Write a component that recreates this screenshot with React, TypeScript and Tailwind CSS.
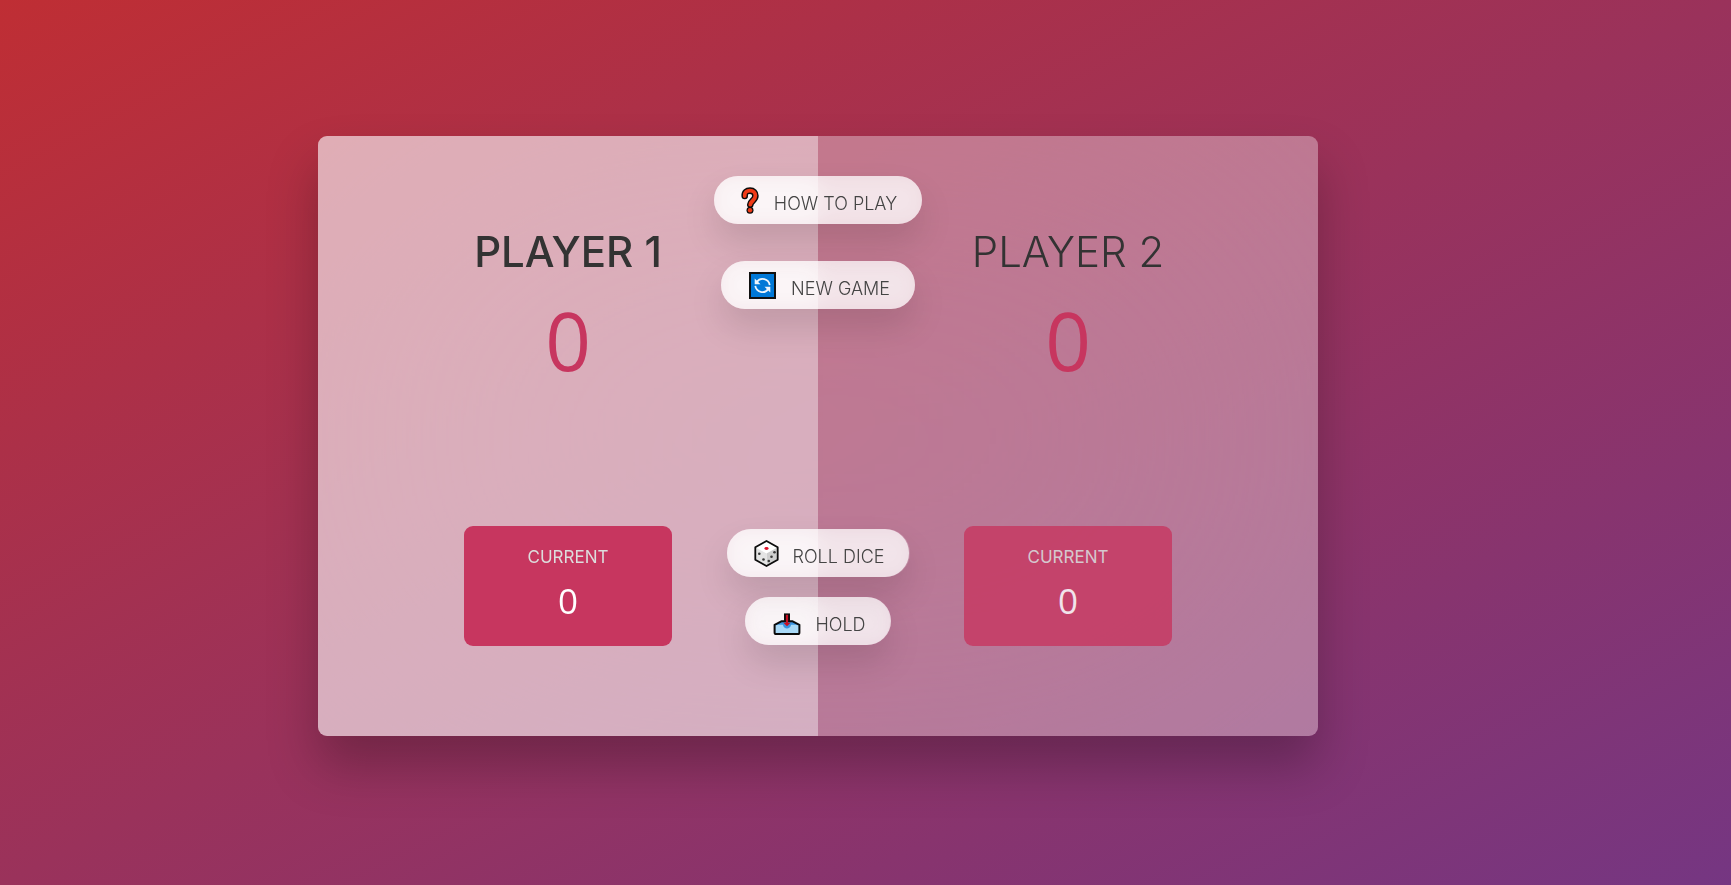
import type { ReactNode } from 'react';

function QuestionIcon() {
  return (
    <svg viewBox="0 0 20 28" className="h-7 w-5 shrink-0" fill="none" strokeLinecap="round" strokeLinejoin="round" aria-hidden="true">
      <path d="M4.700 10C4.400 6.200 6.800 4.600 10 4.600c3.400 0 5.400 2.200 5.400 5.200 0 4.600-4.700 5-5.100 8.800" stroke="#0c0c0c" strokeWidth="6.600" />
      <circle cx="10" cy="24.200" r="3.500" fill="#0c0c0c" />
      <path d="M4.700 10C4.400 6.200 6.800 4.600 10 4.600c3.400 0 5.400 2.200 5.400 5.200 0 4.600-4.700 5-5.100 8.800" stroke="#f03a17" strokeWidth="3.800" />
      <circle cx="10" cy="24.200" r="2.200" fill="#f03a17" />
    </svg>
  );
}

function RefreshIcon() {
  return (
    <svg viewBox="0 0 28 28" className="size-7 shrink-0" fill="none" aria-hidden="true">
      <rect x="1" y="2" width="25" height="25" fill="#0078d7" stroke="#111" strokeWidth="2" />
      <path d="M7.800 10.900a7.200 7.200 0 0 1 12.900 3.200M19.200 18.100a7.200 7.200 0 0 1-12.900-3.200" stroke="#eef5fc" strokeWidth="1.800" />
      <path d="M5.700 7.500v5.800h5.800zM21.300 21.500v-5.800h-5.800z" fill="#eef5fc" />
    </svg>
  );
}

function DiceIcon() {
  return (
    <svg viewBox="0 0 26 28" className="h-7 w-[26px] shrink-0" aria-hidden="true">
      <g transform="translate(0.5 0.5)">
        <path d="M13 1.500 24.200 7.800v12.400L13 26.500 1.800 20.200V7.800z" fill="#fff" />
        <path d="M13 14 24.200 7.800v12.400L13 26.500z" fill="#cfcfcf" />
        <path d="M13 14 1.800 7.800v12.400L13 26.500z" fill="#e4e4e4" />
        <path d="M13 1.500 24.200 7.800v12.400L13 26.500 1.800 20.200V7.800z" fill="none" stroke="#0c0c0c" strokeWidth="1.800" strokeLinejoin="round" />
        <ellipse cx="13" cy="9" rx="2.100" ry="1.400" fill="#e0102a" />
        <g fill="#3a3a3a">
          <circle cx="5.800" cy="14.200" r="1.300" />
          <circle cx="10" cy="20" r="1.300" />
          <circle cx="21" cy="12.800" r="1.300" />
          <circle cx="18" cy="17.200" r="1.300" />
          <circle cx="15.300" cy="21.500" r="1.300" />
        </g>
      </g>
    </svg>
  );
}

function InboxIcon() {
  return (
    <svg viewBox="0 0 28 28" className="size-7 shrink-0" strokeLinejoin="round" aria-hidden="true">
      <g transform="translate(0 1.6)">
        <path d="M1.600 16.200 8.800 12.600h10.400l7.200 3.600v7.600q0 1.600-1.600 1.600H3.200q-1.600 0-1.600-1.600z" fill="#a9d9f7" />
        <path d="M1.600 16.200 8.800 12.600h10.400l7.200 3.600H18c-.6 5-7.400 5-8 0z" fill="#3a94e0" />
        <path d="M1.600 16.200 8.800 12.600h10.400l7.200 3.600v7.600q0 1.600-1.600 1.600H3.200q-1.600 0-1.600-1.600z" fill="none" stroke="#0c0c0c" strokeWidth="2" />
        <path d="M11 4.800h6v8.200h-6z" fill="#0c0c0c" />
        <path d="M12.900 6.200h2.200v8h2.500L14 17.600l-3.600-3.400h2.500z" fill="#c80f22" />
      </g>
    </svg>
  );
}

function GameButton({ icon, children }: { icon: ReactNode; children: ReactNode }) {
  return (
    <button
      type="button"
      className="flex h-12 cursor-pointer items-center rounded-full bg-white/70 px-[25px] text-lg font-light whitespace-nowrap text-[#444] uppercase shadow-[0_18px_35px_rgba(0,0,0,0.12)] backdrop-blur-[10px]"
    >
      {icon}
      <span className="pt-2">{children}</span>
    </button>
  );
}

function Player({ name, score, current, active }: { name: string; score: number; current: number; active: boolean }) {
  return (
    <section className={`flex flex-col items-center py-[90px] ${active ? 'col-start-1 bg-white/40' : 'col-start-2'}`}>
      <h2 className={`mb-[10px] text-[42px] leading-[52px] whitespace-nowrap text-[#333] uppercase ${active ? 'font-medium' : 'font-light'}`}>
        {name}
      </h2>
      <p className="mb-auto font-['Open_Sans',sans-serif] text-[80px] leading-[104px] text-[#c7365f]">{score}</p>
      <div
        className={`flex min-h-[120px] w-[208px] flex-col items-center rounded-[9px] bg-[#c7365f] pt-[21px] text-white ${active ? '' : 'opacity-80'}`}
      >
        <p className="mb-3 text-[17px] leading-5 text-[#ddd] uppercase">Current</p>
        <p className="font-['Open_Sans',sans-serif] text-[35px] leading-[44px] font-medium">{current}</p>
      </div>
    </section>
  );
}

export default function App() {
  return (
    <div className="flex min-h-screen items-center justify-center bg-[linear-gradient(to_top_left,#753682_0%,#bf2e34_100%)] pr-[95px] pb-[13px] font-['Inter',sans-serif]">
      <main className="grid min-h-[600px] w-full max-w-[1000px] grid-cols-2 overflow-hidden rounded-[9px] bg-white/35 shadow-[0_30px_50px_rgba(0,0,0,0.25)] backdrop-blur-[200px] *:row-start-1">
        <Player name="Player 1" score={0} current={0} active />
        <Player name="Player 2" score={0} current={0} active={false} />
        <div className="col-span-2 col-start-1 flex flex-col items-center justify-between justify-self-center pt-10 pb-[91px]">
          <div className="flex flex-col items-center gap-[37px]">
            <GameButton icon={<span className="mr-[14px] ml-px flex"><QuestionIcon /></span>}>How to play</GameButton>
            <GameButton icon={<span className="mr-[14px] ml-[3px] flex"><RefreshIcon /></span>}>New game</GameButton>
          </div>
          <div className="flex flex-col items-center gap-5">
            <GameButton icon={<span className="mr-[14px] ml-px flex"><DiceIcon /></span>}>Roll dice</GameButton>
            <GameButton icon={<span className="mr-[14px] ml-[3px] flex"><InboxIcon /></span>}>Hold</GameButton>
          </div>
        </div>
      </main>
    </div>
  );
}
